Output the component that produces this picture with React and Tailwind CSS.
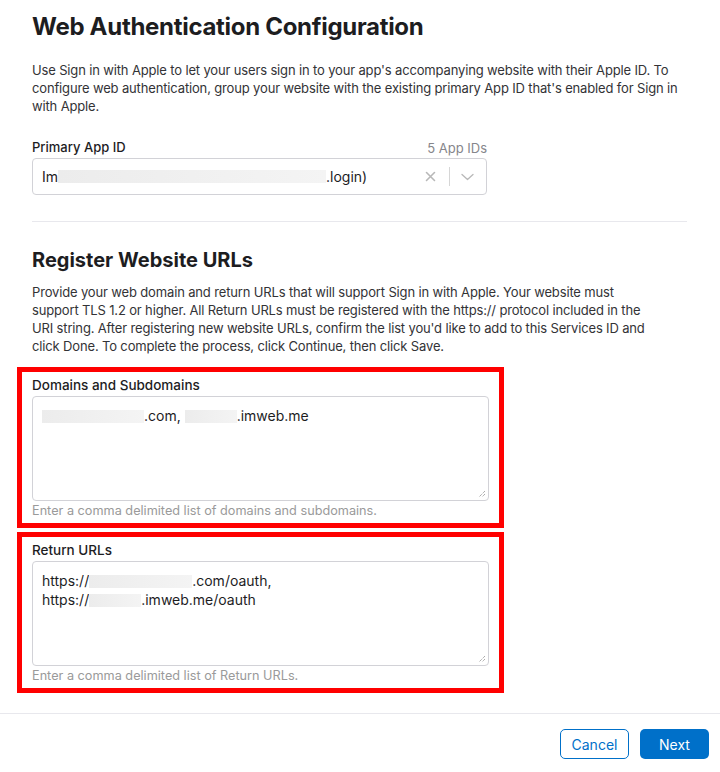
import React from "react";

const font = { fontFamily: "Inter, 'Noto Sans', sans-serif" };

function Redact({ w }) {
  return <span className={`inline-block h-[13px] align-[-2px] bg-gradient-to-r from-[#ececec] to-[#f4f4f4] ${w}`} />;
}

function Grip() {
  return (
    <svg className="absolute right-[2px] bottom-[2px]" width="8" height="8" viewBox="0 0 8 8">
      <path d="M7 1L1 7M7 4L4 7" stroke="#8a8a8a" strokeWidth="1" strokeDasharray="1 1" />
    </svg>
  );
}

function FieldBox({ label, hint, children }) {
  return (
    <div className="ml-[-15px] w-[487px] border-[5px] border-[#ff0000] px-[10px] pt-[5px] pb-[4px]">
      <p className="text-[13.5px] leading-[16px] font-medium text-[#1d1d1f]">{label}</p>
      <div className="relative mt-[3px] h-[105px] rounded-[4px] border border-[#d2d2d7] px-[9px] py-[9px] text-[14px] leading-[19px] text-[#1d1d1f]">
        {children}
        <Grip />
      </div>
      <p className="mt-[2px] text-[12.7px] leading-[16px] text-[#9a9a9a]">{hint}</p>
    </div>
  );
}

export default function App() {
  return (
    <div className="w-[720px] h-[772px] bg-white flex flex-col" style={font}>
      <div className="px-[32px] pr-[33px] pt-[11px] flex-1">
        <h1 className="text-[24px] leading-[32px] font-bold tracking-[-0.3px] text-[#1d1d1f]">
          Web Authentication Configuration
        </h1>
        <p className="mt-[18px] text-[13px] leading-[18px] tracking-[-0.15px] text-[#333336]">
          Use Sign in with Apple to let your users sign in to your app's accompanying website with their Apple ID. To
          <br />
          configure web authentication, group your website with the existing primary App ID that's enabled for Sign in
          <br />
          with Apple.
        </p>

        <div className="mt-[24px] w-[455px]">
          <div className="flex items-end justify-between">
            <span className="text-[13px] leading-[16px] font-medium text-[#1d1d1f]">Primary App ID</span>
            <span className="text-[13px] leading-[16px] text-[#86868b] translate-y-[1px]">5 App IDs</span>
          </div>
          <div className="mt-[3px] h-[37px] rounded-[4px] border border-[#d2d2d7] flex items-center pl-[9px] pr-[12px] text-[14px] text-[#1d1d1f]">
            <span className="flex-1 flex items-center">
              Im<Redact w="w-[268px]" />.login)
            </span>
            <svg width="11" height="11" viewBox="0 0 11 11" className="mr-[13px]">
              <path d="M1.5 1.5l8 8M9.5 1.5l-8 8" stroke="#b8b8b8" strokeWidth="1.6" strokeLinecap="round" />
            </svg>
            <span className="w-px h-[19px] bg-[#d6d6d6]" />
            <svg width="13" height="8" viewBox="0 0 13 8" className="ml-[11px]">
              <path d="M1 1.5l5.5 5 5.5-5" stroke="#b8b8b8" strokeWidth="1.3" fill="none" strokeLinecap="round" strokeLinejoin="round" />
            </svg>
          </div>
        </div>

        <div className="mt-[26px] h-px bg-[#e8e8ed]" />

        <h2 className="mt-[24px] text-[20px] leading-[28px] font-bold text-[#1d1d1f]">Register Website URLs</h2>
        <p className="mt-[9px] text-[13px] leading-[18px] tracking-[-0.15px] text-[#333336]">
          Provide your web domain and return URLs that will support Sign in with Apple. Your website must
          <br />
          support TLS 1.2 or higher. All Return URLs must be registered with the https:// protocol included in the
          <br />
          URI string. After registering new website URLs, confirm the list you'd like to add to this Services ID and
          <br />
          click Done. To complete the process, click Continue, then click Save.
        </p>

        <div className="mt-[12px] flex flex-col gap-[4px]">
          <FieldBox label="Domains and Subdomains" hint="Enter a comma delimited list of domains and subdomains.">
            <div>
              <Redact w="w-[102px]" />.com, <Redact w="w-[52px]" />.imweb.me
            </div>
          </FieldBox>
          <FieldBox label="Return URLs" hint="Enter a comma delimited list of Return URLs.">
            <div>
              https://<Redact w="w-[103px]" />.com/oauth,
            </div>
            <div>
              https://<Redact w="w-[52px]" />.imweb.me/oauth
            </div>
          </FieldBox>
        </div>
      </div>

      <div className="border-t border-[#e8e8ed] h-[59px] flex items-start justify-end gap-[11px] pt-[15px] pr-[11px]">
        <button className="w-[69px] h-[30px] rounded-[5px] border border-[#0070c9] text-[14px] text-[#0070c9] bg-white">
          Cancel
        </button>
        <button className="w-[69px] h-[30px] rounded-[5px] bg-[#0070c9] text-[14px] text-white">Next</button>
      </div>
    </div>
  );
}
